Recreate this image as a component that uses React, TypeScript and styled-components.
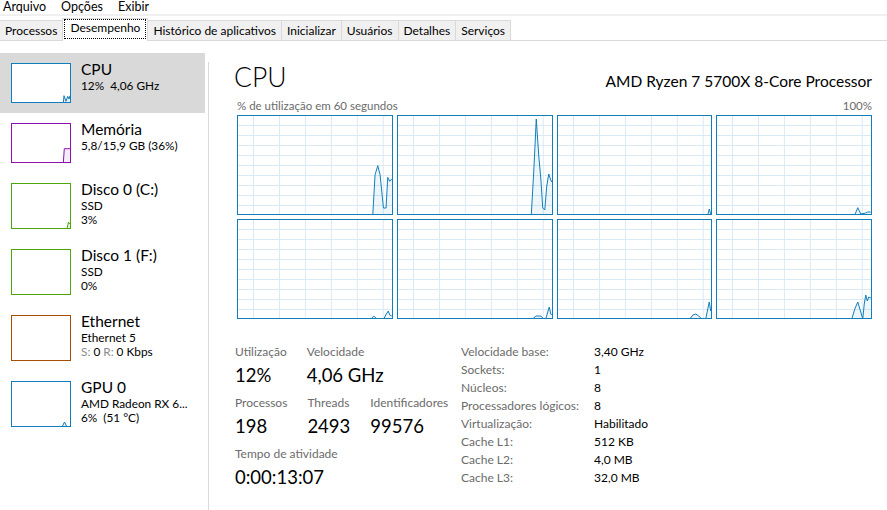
import React from "react";
import styled, { createGlobalStyle } from "styled-components";

const FONT = `Lato, "Open Sans", "Liberation Sans", sans-serif`;

type Pt = [number, number];

const colors = {
  cpu: "#117dbb",
  mem: "#8b12ae",
  disk: "#4da60c",
  net: "#a74f01",
  grid: "#d9eaf4",
  label: "#6b6b6b",
  line: "#d9d9d9",
};

const GlobalStyle = createGlobalStyle`
  html, body {
    margin: 0;
    padding: 0;
    background: #ffffff;
  }
  body {
    font-family: ${FONT};
    color: #000;
  }
`;

const Window = styled.div`
  width: 887px;
  height: 510px;
  display: flex;
  flex-direction: column;
  overflow: hidden;
  background: #fff;
`;

const MenuBar = styled.div`
  display: flex;
  gap: 15px;
  height: 14px;
  padding-left: 3px;
  border-bottom: 2px solid #f0f0f0;
  font-size: 12.5px;
  line-height: 13px;
`;

const TabStrip = styled.div`
  display: flex;
  align-items: flex-end;
  height: 24px;
  border-bottom: 1px solid ${colors.line};
`;

const Tab = styled.div<{ $active?: boolean }>`
  box-sizing: border-box;
  position: relative;
  height: ${(p) => (p.$active ? 23 : 20)}px;
  margin-bottom: ${(p) => (p.$active ? -1 : 0)}px;
  margin-left: -1px;
  padding: ${(p) => (p.$active ? "0 1px 2px" : "0 5px")};
  border: 1px solid ${colors.line};
  border-bottom: none;
  background: ${(p) => (p.$active ? "#fff" : "#f0f0f0")};
  font-size: 12px;
  line-height: 19px;
  white-space: nowrap;
`;

const FocusRing = styled.span`
  display: block;
  box-sizing: border-box;
  height: 20px;
  padding: 0 5px 3px;
  border: 1px dotted #000;
  line-height: 15px;
`;

const Body = styled.div`
  flex: 1;
  display: flex;
  min-height: 0;
`;

const Sidebar = styled.div`
  width: 205px;
  flex-shrink: 0;
  padding-top: 12px;
`;

const Splitter = styled.div`
  width: 1px;
  flex-shrink: 0;
  margin: 21px 0 0 3px;
  background: #dadada;
`;

const SideItem = styled.div<{ $selected?: boolean }>`
  display: flex;
  align-items: flex-start;
  gap: 10px;
  padding: 10px 0 10px 11px;
  background: ${(p) => (p.$selected ? "#d9d9d9" : "transparent")};
`;

const Thumb = styled.div<{ $color: string; $tall?: boolean }>`
  box-sizing: border-box;
  width: 60px;
  height: ${(p) => (p.$tall ? 46 : 40)}px;
  flex-shrink: 0;
  border: 1px solid ${(p) => p.$color};
  background: #fff;
  overflow: hidden;

  svg {
    display: block;
  }
`;

const SideText = styled.div`
  margin-top: -4px;
  min-width: 0;
`;

const SideTitle = styled.div`
  font-size: 15.5px;
  line-height: 20px;
`;

const SideLine = styled.div`
  font-size: 11.8px;
  line-height: 14px;
  white-space: nowrap;
`;

const Dim = styled.span`
  color: #8a8a8a;
`;

const Panel = styled.div`
  flex: 1;
  min-width: 0;
  padding: 20px 15px 0 25px;
`;

const Header = styled.div`
  display: flex;
  align-items: baseline;
  justify-content: space-between;
`;

const Title = styled.div`
  font-size: 26.5px;
  font-weight: 300;
  line-height: 32px;
`;

const CpuName = styled.div`
  font-size: 15.5px;
  line-height: 20px;
`;

const Caption = styled.div`
  display: flex;
  justify-content: space-between;
  margin: 5px 0 0 3px;
  font-size: 11.5px;
  line-height: 15px;
  color: ${colors.label};
`;

const GraphGrid = styled.div`
  display: grid;
  grid-template-columns: repeat(4, 1fr);
  grid-auto-rows: 100px;
  gap: 4px;
  margin: 2px 0 0 3px;
`;

const GraphBox = styled.div`
  border: 1px solid ${colors.cpu};
  min-width: 0;
  overflow: hidden;

  svg {
    display: block;
  }
`;

const Stats = styled.div`
  display: flex;
  align-items: flex-start;
  margin: 25px 0 0 1px;
`;

const LeftStats = styled.div`
  width: 226px;
  display: flex;
  flex-direction: column;
  gap: 9px;
`;

const StatRow = styled.div`
  display: flex;
  gap: 20px;
`;

const Stat = styled.div`
  display: flex;
  flex-direction: column;
`;

const StatLabel = styled.div`
  font-size: 12px;
  line-height: 16px;
  color: ${colors.label};
  white-space: nowrap;
`;

const StatValue = styled.div`
  margin-top: 4px;
  font-size: 18.5px;
  line-height: 22px;
  white-space: nowrap;
`;

const InfoTable = styled.div`
  display: grid;
  grid-template-columns: 133px auto;
  margin-top: -1px;
  font-size: 12px;
  line-height: 18px;
`;

const InfoKey = styled.div`
  color: ${colors.label};
`;

const InfoValue = styled.div`
  color: #000;
`;

// per-core usage lines, inner graph coords (154 x 98)
const CORES: Pt[][] = [
  [[0, 99], [135, 99], [137.3, 58.7], [140, 49.7], [142.3, 58.7], [145.7, 92], [148.3, 92], [150, 61.3], [152, 65.3], [154, 63]],
  [[0, 99], [133.5, 99], [136, 55], [138.5, 3], [141, 40], [143, 62], [145, 92], [147, 94], [149, 70], [151, 58], [153, 64], [154, 66]],
  [[0, 99], [150, 99], [151.5, 93], [153, 98], [154, 97]],
  [[0, 99], [138, 99], [141, 91.7], [144, 98], [149, 97], [151, 96], [154, 96]],
  [[0, 99], [133, 99], [136, 96], [139, 99], [146, 99], [148, 95], [150.5, 91], [152, 95], [154, 96]],
  [[0, 99], [135, 99], [138, 96], [143, 96], [146, 99], [148, 99], [150, 92], [151.5, 87], [153, 94], [154, 95]],
  [[0, 99], [132, 99], [135, 95], [138, 94], [141, 96], [144, 99], [148, 99], [150, 89], [151.5, 82], [153, 91], [154, 89]],
  [[0, 99], [135, 99], [138, 89], [141, 82], [144, 92], [146, 99], [147.5, 84], [149, 75], [150.5, 81], [152, 77], [154, 78]],
];

type SideEntry = {
  title: string;
  lines: React.ReactNode[];
  color: string;
  fill: string;
  points: Pt[];
  selected?: boolean;
};

const SIDE: SideEntry[] = [
  {
    title: "CPU",
    lines: ["12%\u00a0\u00a04,06 GHz"],
    color: colors.cpu,
    fill: "rgba(17,125,187,0.1)",
    points: [[51.3, 39], [52, 31.7], [54, 37.3], [55.7, 32.3], [57, 35], [58, 31.7]],
    selected: true,
  },
  {
    title: "Memória",
    lines: ["5,8/15,9 GB (36%)"],
    color: colors.mem,
    fill: "rgba(139,18,174,0.08)",
    points: [[51.3, 39], [52.3, 24.7], [58, 24.7]],
  },
  {
    title: "Disco 0 (C:)",
    lines: ["SSD", "3%"],
    color: colors.disk,
    fill: "rgba(77,166,12,0.1)",
    points: [[55, 45], [56.5, 38], [57.5, 40], [58, 39]],
  },
  {
    title: "Disco 1 (F:)",
    lines: ["SSD", "0%"],
    color: colors.disk,
    fill: "rgba(77,166,12,0.1)",
    points: [],
  },
  {
    title: "Ethernet",
    lines: [
      "Ethernet 5",
      <>
        <Dim>S:</Dim> 0 <Dim>R:</Dim> 0 Kbps
      </>,
    ],
    color: colors.net,
    fill: "rgba(167,79,1,0.1)",
    points: [],
  },
  {
    title: "GPU 0",
    lines: ["AMD Radeon RX 6...", "6%\u00a0\u00a0(51 °C)"],
    color: colors.cpu,
    fill: "rgba(17,125,187,0.1)",
    points: [[50, 45], [52.5, 40], [55, 45]],
  },
];

const TABS = ["Processos", "Desempenho", "Histórico de aplicativos", "Inicializar", "Usuários", "Detalhes", "Serviços"];

const INFO: [string, string][] = [
  ["Velocidade base:", "3,40 GHz"],
  ["Sockets:", "1"],
  ["Núcleos:", "8"],
  ["Processadores lógicos:", "8"],
  ["Virtualização:", "Habilitado"],
  ["Cache L1:", "512 KB"],
  ["Cache L2:", "4,0 MB"],
  ["Cache L3:", "32,0 MB"],
];

function toStr(pts: Pt[]) {
  return pts.map((p) => `${p[0]},${p[1]}`).join(" ");
}

function UsageGraph({ points }: { points: Pt[] }) {
  const W = 154;
  const H = 98;
  const vLines = [15, 41, 67, 93, 119, 145];
  const hLines = [9, 19, 29, 39, 49, 59, 69, 79, 89];
  const area = `${points[0][0]},${H + 1} ${toStr(points)} ${points[points.length - 1][0]},${H + 1}`;
  return (
    <GraphBox>
      <svg viewBox={`0 0 ${W} ${H}`} preserveAspectRatio="none" width="100%" height="100%">
        {vLines.map((x) => (
          <line key={"v" + x} x1={x + 0.5} y1={0} x2={x + 0.5} y2={H} stroke={colors.grid} strokeWidth={1} />
        ))}
        {hLines.map((y) => (
          <line key={"h" + y} x1={0} y1={y + 0.5} x2={W} y2={y + 0.5} stroke={colors.grid} strokeWidth={1} />
        ))}
        <polygon points={area} fill="rgba(17,125,187,0.07)" />
        <polyline points={toStr(points)} fill="none" stroke={colors.cpu} strokeWidth={1} />
      </svg>
    </GraphBox>
  );
}

function ThumbGraph({ entry, tall }: { entry: SideEntry; tall: boolean }) {
  const H = tall ? 44 : 38;
  const pts = entry.points;
  return (
    <Thumb $color={entry.color} $tall={tall}>
      {pts.length > 0 && (
        <svg viewBox={`0 0 58 ${H}`} width="58" height={H}>
          <polygon
            points={`${pts[0][0]},${H + 1} ${toStr(pts)} ${pts[pts.length - 1][0]},${H + 1}`}
            fill={entry.fill}
          />
          <polyline points={toStr(pts)} fill="none" stroke={entry.color} strokeWidth={1} />
        </svg>
      )}
    </Thumb>
  );
}

export default function App() {
  return (
    <>
      <GlobalStyle />
      <Window>
        <MenuBar>
          <span>Arquivo</span>
          <span>Opções</span>
          <span>Exibir</span>
        </MenuBar>

        <TabStrip>
          {TABS.map((t) =>
            t === "Desempenho" ? (
              <Tab key={t} $active>
                <FocusRing>{t}</FocusRing>
              </Tab>
            ) : (
              <Tab key={t}>{t}</Tab>
            )
          )}
        </TabStrip>

        <Body>
          <Sidebar>
            {SIDE.map((s) => {
              const tall = s.lines.length > 1;
              return (
                <SideItem key={s.title} $selected={s.selected}>
                  <ThumbGraph entry={s} tall={tall} />
                  <SideText>
                    <SideTitle>{s.title}</SideTitle>
                    {s.lines.map((l, i) => (
                      <SideLine key={i}>{l}</SideLine>
                    ))}
                  </SideText>
                </SideItem>
              );
            })}
          </Sidebar>
          <Splitter />

          <Panel>
            <Header>
              <Title>CPU</Title>
              <CpuName>AMD Ryzen 7 5700X 8-Core Processor</CpuName>
            </Header>
            <Caption>
              <span>% de utilização em 60 segundos</span>
              <span>100%</span>
            </Caption>
            <GraphGrid>
              {CORES.map((c, i) => (
                <UsageGraph key={i} points={c} />
              ))}
            </GraphGrid>

            <Stats>
              <LeftStats>
                <StatRow>
                  <Stat>
                    <StatLabel>Utilização</StatLabel>
                    <StatValue>12%</StatValue>
                  </Stat>
                  <Stat>
                    <StatLabel>Velocidade</StatLabel>
                    <StatValue>4,06 GHz</StatValue>
                  </Stat>
                </StatRow>
                <StatRow>
                  <Stat>
                    <StatLabel>Processos</StatLabel>
                    <StatValue>198</StatValue>
                  </Stat>
                  <Stat>
                    <StatLabel>Threads</StatLabel>
                    <StatValue>2493</StatValue>
                  </Stat>
                  <Stat>
                    <StatLabel>Identificadores</StatLabel>
                    <StatValue>99576</StatValue>
                  </Stat>
                </StatRow>
                <StatRow>
                  <Stat>
                    <StatLabel>Tempo de atividade</StatLabel>
                    <StatValue>0:00:13:07</StatValue>
                  </Stat>
                </StatRow>
              </LeftStats>

              <InfoTable>
                {INFO.map(([k, v]) => (
                  <React.Fragment key={k}>
                    <InfoKey>{k}</InfoKey>
                    <InfoValue>{v}</InfoValue>
                  </React.Fragment>
                ))}
              </InfoTable>
            </Stats>
          </Panel>
        </Body>
      </Window>
    </>
  );
}
